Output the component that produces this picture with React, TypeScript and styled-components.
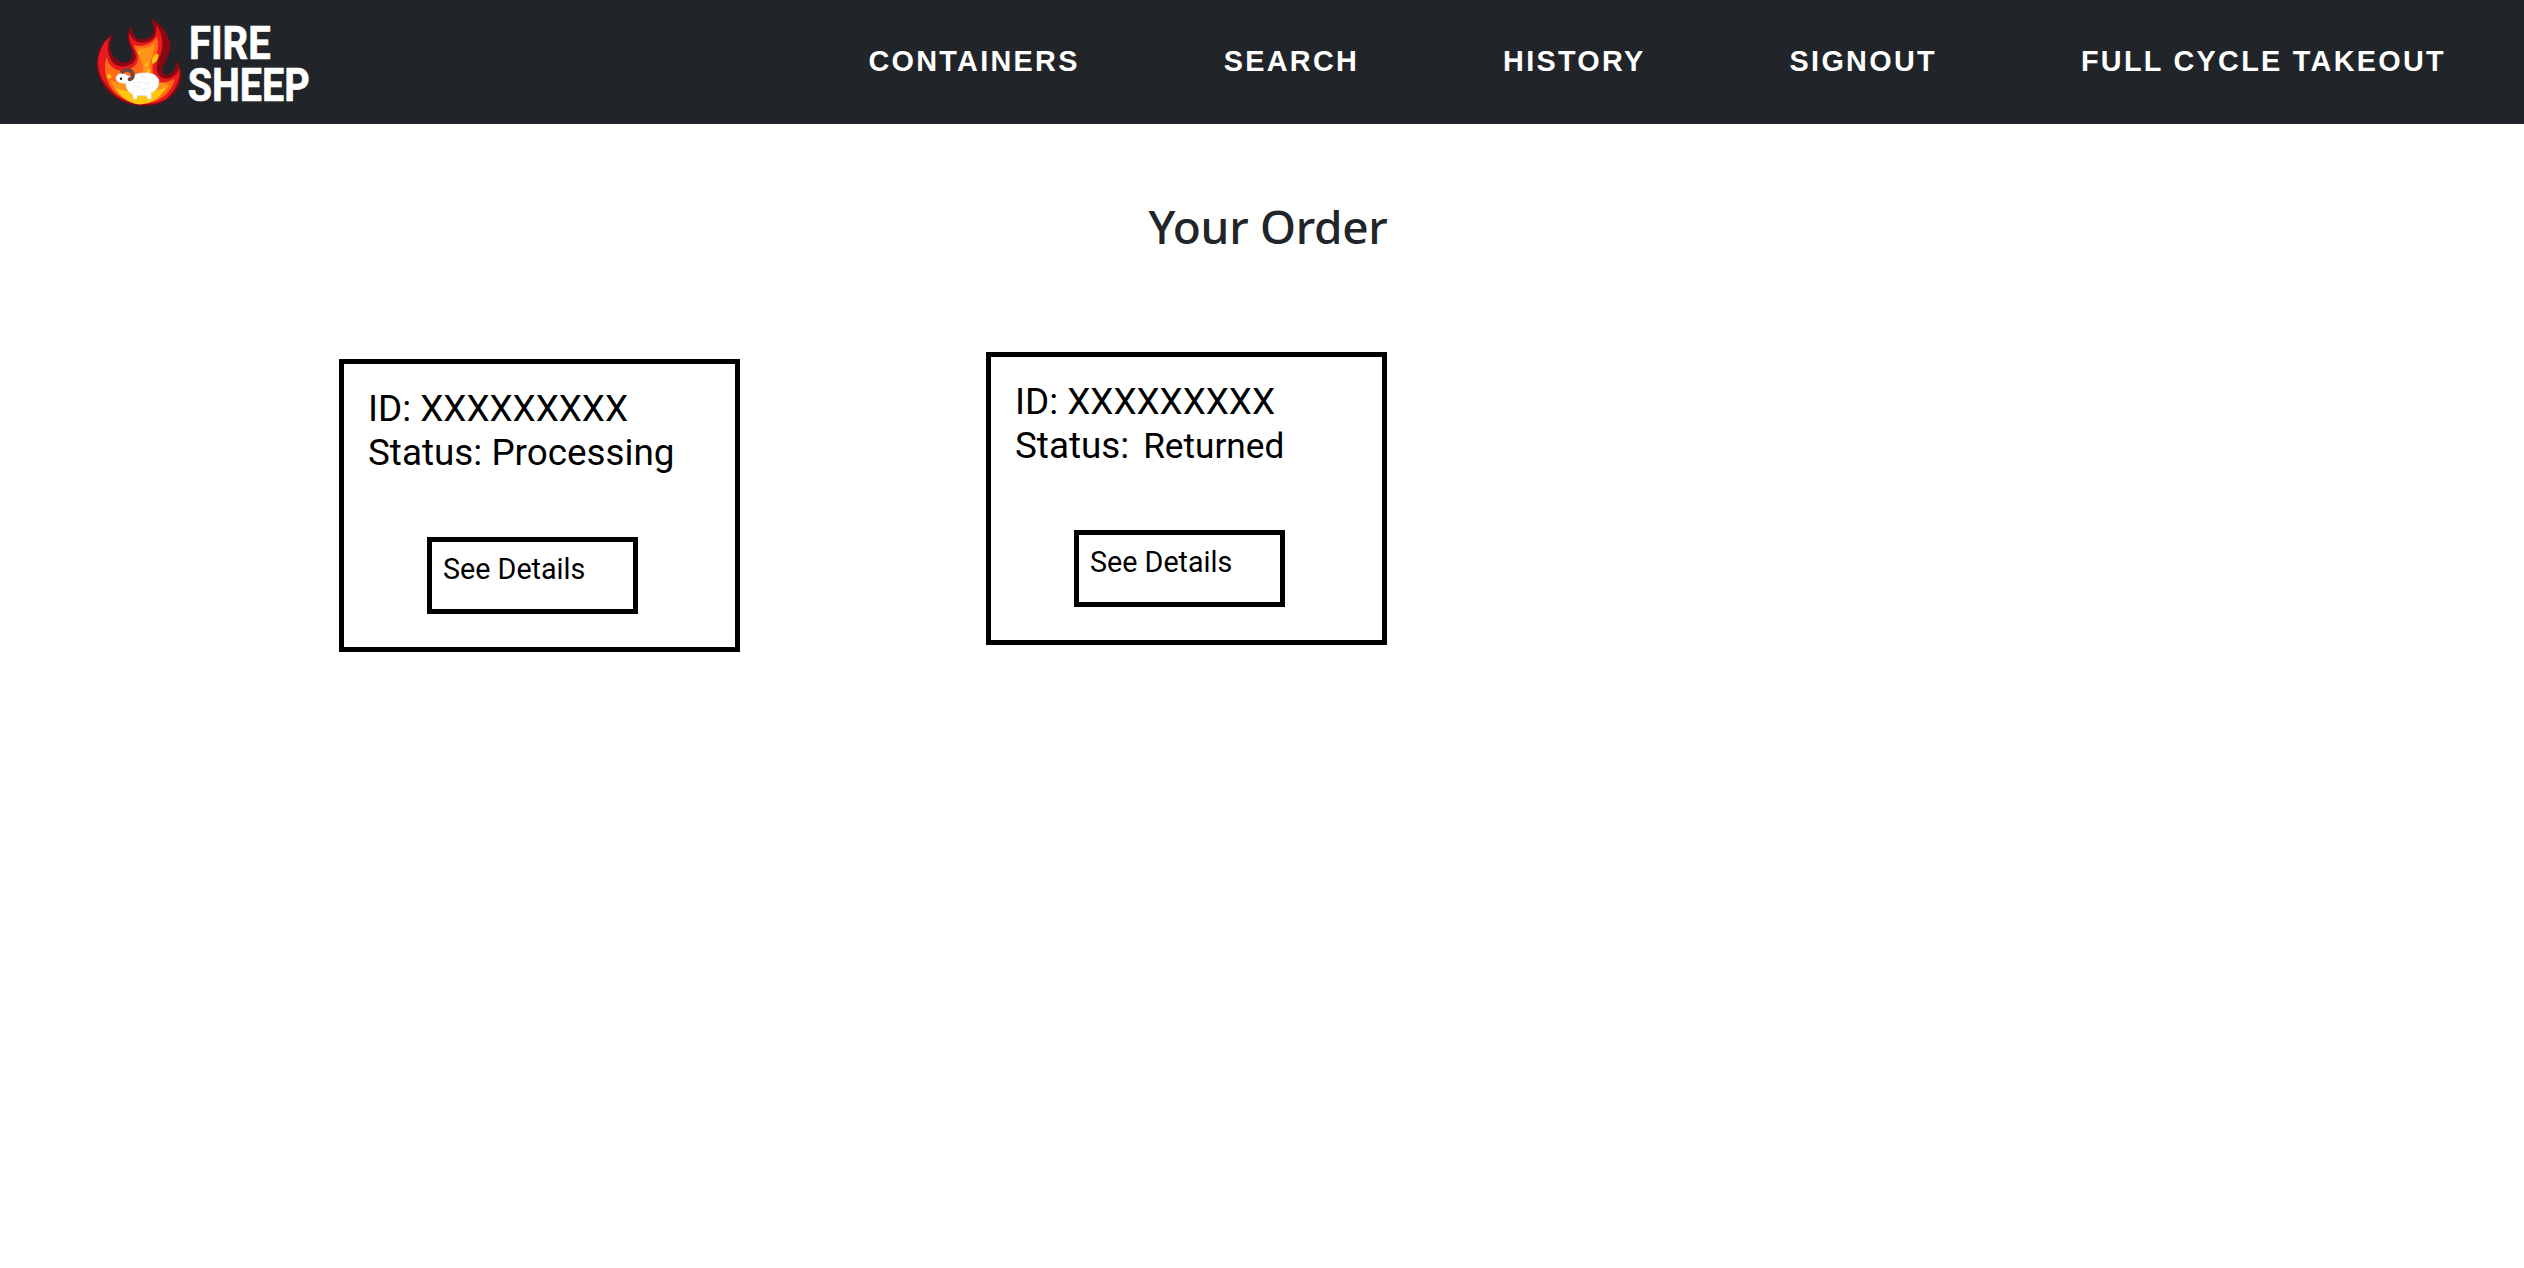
import React from "react";
import styled, { createGlobalStyle } from "styled-components";

const Global = createGlobalStyle`
  * { box-sizing: border-box; }
  body { margin: 0; background: #fff; }
`;

const Header = styled.header`
  display: flex;
  align-items: flex-start;
  justify-content: space-between;
  height: 124px;
  padding: 12px 78px 0 90px;
  background: #212529;
`;

const Brand = styled.a`
  display: block;
  width: 230px;
  height: 100px;
`;

const Nav = styled.nav`
  display: flex;
  gap: 144px;
  padding-top: 32px;
`;

const NavLink = styled.a`
  font: 700 28.8px/34px "Liberation Sans", Arial, sans-serif;
  letter-spacing: 2.3px;
  color: #fff;
  white-space: nowrap;
`;

const Title = styled.h1`
  margin: 69px 0 0 12px;
  font: 500 46px/66px "Noto Sans", sans-serif;
  letter-spacing: -0.3px;
  text-align: center;
  color: #212529;
`;

const Orders = styled.section`
  display: flex;
  align-items: flex-start;
  gap: 246px;
  padding: 93px 0 0 339px;
`;

const Card = styled.article<{ $drop: number }>`
  width: 401px;
  height: 293px;
  margin-top: ${(p) => p.$drop}px;
  padding: 23px 24px;
  border: 5px solid #000;
  font: 400 36.85px/44px Roboto, sans-serif;
  color: #000;
`;

const Line = styled.div`
  height: 44px;
  white-space: pre;
`;

const Status = styled.span<{ $compact: boolean }>`
  font-size: ${(p) => (p.$compact ? "35.2px" : "inherit")};
  line-height: 1;
  margin-left: ${(p) => (p.$compact ? 4.8 : 0)}px;
`;

const Details = styled.button`
  display: flex;
  align-items: flex-start;
  width: 211px;
  height: 77px;
  margin: 62px 0 0 59px;
  padding: 10px 11px;
  border: 5px solid #000;
  background: #fff;
  font: 400 28.7px/34px Roboto, sans-serif;
  color: #000;
`;

const Logo = () => (
  <svg width="230" height="100" viewBox="30 36 690 300">
    <path fill="#8b0714" d="M103 100C88 118 87 142 96 163C106 182 125 192 142 186C158 180 160 158 151 140C142 124 138 100 157 77C155 98 164 115 182 118C200 119 216 110 221 97C223 82 219 68 210 54C240 68 262 96 271 128C275 160 254 180 247 204C245 220 254 229 267 223C283 216 290 200 285 180C301 196 308 220 302 244C290 288 250 318 190 318C110 316 52 262 50 190C52 150 72 115 103 100Z" />
    <path fill="#e91a1c" d="M90 110C78 136 82 176 106 194C130 206 164 198 168 172C168 152 146 136 147 98C154 120 176 134 202 126C222 120 232 104 228 74C246 96 252 130 244 156C234 180 228 196 231 214C238 238 262 242 280 228C290 222 296 212 298 204C304 232 288 274 257 298C220 319 150 319 110 288C72 256 54 226 54 186C56 156 68 128 90 110Z" />
    <path fill="#ff6b16" d="M80 170C86 198 106 214 132 212C160 206 178 192 174 166C168 150 162 144 163 134C184 144 212 136 230 112C240 130 232 160 222 180C214 204 216 230 232 242C250 252 268 244 284 236C278 266 258 290 228 302C190 316 140 310 108 280C78 250 68 210 80 170Z" />
    <path fill="#ff9518" d="M174 144C192 150 212 142 222 130C226 150 212 176 208 200C204 232 224 254 250 250C258 251 268 254 264 262C240 298 180 310 134 290C110 276 98 260 92 240C130 260 182 250 190 212C194 188 174 176 174 144Z" />
    <path fill="#ffc60f" d="M106 264C150 284 220 280 258 262C240 300 204 316 172 313C146 308 120 290 106 264ZM216 184C216 170 230 158 235 162C238 176 226 192 216 191ZM196 196C196 188 206 184 205 192C204 199 197 202 196 196ZM203 210C206 205 214 206 212 212L208 224L200 224ZM81 226C84 221 92 222 94 228C95 236 87 238 82 234ZM173 156C177 151 183 154 181 160C179 166 173 164 173 156Z" />
    <path fill="#fdfdfd" stroke="#d3cdc8" strokeWidth="1.5" d="M108 232C112 222 124 217 136 222C144 228 152 232 160 226C176 216 206 216 224 224C234 232 240 242 236 248C238 260 228 272 214 278L214 296L203 298L199 287L172 287L170 298L160 297L158 284C144 276 136 264 138 250C126 252 106 248 108 232Z" />
    <path fill="none" stroke="#e4e4e4" strokeWidth="2" d="M158 236q8-8 16 0M182 232q10-6 18 2M160 258q10 8 20 0M192 250q10 6 18-4M172 246q8 4 14 0M190 266q12 4 20-6" />
    <path fill="none" stroke="#77433b" strokeWidth="12" strokeLinecap="round" d="M127 215C138 206 154 209 158 221C160 231 156 237 149 238" />
    <circle cx="123" cy="236" r="3.5" fill="#111" />
    <g fill="#fff" stroke="#fff" strokeWidth="2" fontFamily="Roboto, sans-serif" fontWeight="700" fontSize="137">
      <text x="327" y="177" textLength="245" lengthAdjust="spacingAndGlyphs">FIRE</text>
      <text x="323" y="303" textLength="366" lengthAdjust="spacingAndGlyphs">SHEEP</text>
    </g>
  </svg>
);

const links = ["CONTAINERS", "SEARCH", "HISTORY", "SIGNOUT", "FULL CYCLE TAKEOUT"];

const orders = [
  { status: "Processing", drop: 7, compact: false },
  { status: "Returned", drop: 0, compact: true },
];

export default function App() {
  return (
    <>
      <Global />
      <Header>
        <Brand><Logo /></Brand>
        <Nav>{links.map((l) => <NavLink key={l}>{l}</NavLink>)}</Nav>
      </Header>
      <main>
        <Title>Your Order</Title>
        <Orders>
          {orders.map((o) => (
            <Card key={o.status} $drop={o.drop}>
              <Line>ID: XXXXXXXXX</Line>
              <Line>Status: <Status $compact={o.compact}>{o.status}</Status></Line>
              <Details>See Details</Details>
            </Card>
          ))}
        </Orders>
      </main>
    </>
  );
}
